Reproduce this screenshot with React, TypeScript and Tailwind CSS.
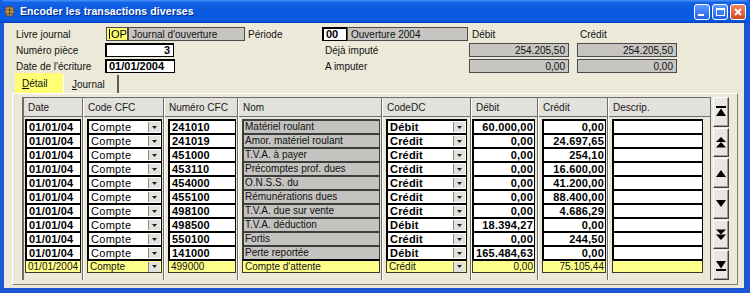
import React from "react";

type Entry = { num: string; nom: string; dc: string; debit: string; credit: string };

const ENTRIES: Entry[] = [
  { num: "241010", nom: "Matériel roulant", dc: "Débit", debit: "60.000,00", credit: "0,00" },
  { num: "241019", nom: "Amor. matériel roulant", dc: "Crédit", debit: "0,00", credit: "24.697,65" },
  { num: "451000", nom: "T.V.A. à payer", dc: "Crédit", debit: "0,00", credit: "254,10" },
  { num: "453110", nom: "Précomptes prof. dues", dc: "Crédit", debit: "0,00", credit: "16.600,00" },
  { num: "454000", nom: "O.N.S.S. du", dc: "Crédit", debit: "0,00", credit: "41.200,00" },
  { num: "455100", nom: "Rémunérations dues", dc: "Crédit", debit: "0,00", credit: "88.400,00" },
  { num: "498100", nom: "T.V.A. due sur vente", dc: "Crédit", debit: "0,00", credit: "4.686,29" },
  { num: "498500", nom: "T.V.A. déduction", dc: "Débit", debit: "18.394,27", credit: "0,00" },
  { num: "550100", nom: "Fortis", dc: "Crédit", debit: "0,00", credit: "244,50" },
  { num: "141000", nom: "Perte reportée", dc: "Débit", debit: "165.484,63", credit: "0,00" }
];

const PENDING = {
  date: "01/01/2004",
  code: "Compte",
  num: "499000",
  nom: "Compte d'attente",
  dc: "Crédit",
  debit: "0,00",
  credit: "75.105,44"
};

const cellClass = "h-[14px] flex items-center overflow-hidden whitespace-nowrap border-l-2 border-r border-t-2 border-black bg-white";
const grayCellClass = "h-[14px] flex items-center overflow-hidden whitespace-nowrap border-l-2 border-r border-t-2 border-[#3c3c3c] bg-[#C4C3C0]";
const pendingClass = "h-[14px] flex items-center overflow-hidden whitespace-nowrap border border-t-2 border-[#3a3a24] border-t-black bg-[#FFFF8C]";
const boldText = "text-[11px] font-bold leading-none tracking-[0.2px] text-black";
const plainText = "text-[10px] leading-none text-[#111]";

function ArrowDown() {
  return (
    <svg width="5" height="3" viewBox="0 0 5 3">
      <path d="M0 0h5L2.5 3z" fill="#222" />
    </svg>
  );
}

function DropButton() {
  return (
    <span className="mr-[1px] flex h-[10px] w-[12px] shrink-0 items-center justify-center border-l border-[#8a8a8a] bg-[#E4E2DD]">
      <ArrowDown />
    </span>
  );
}

function Column({
  width,
  title,
  first,
  pad,
  children
}: {
  width: string;
  title: string;
  first?: boolean;
  pad: string;
  children: React.ReactNode;
}) {
  return (
    <div className={`flex shrink-0 flex-col border-r border-[#6c6c6c] ${first ? "" : "border-l border-l-white"} ${width}`}>
      <div className="flex h-[19px] shrink-0 items-center border-b border-[#6c6c6c] bg-[#E3E1DB] pl-[4px] text-[10px] text-[#1a1a1a]">
        {title}
      </div>
      <div className={`mt-[2px] flex flex-col ${pad}`}>{children}</div>
    </div>
  );
}

function ScrollIcon({ kind }: { kind: "first" | "pgup" | "up" | "down" | "pgdn" | "last" }) {
  return (
    <svg width="10" height="11" viewBox="0 0 10 11">
      {kind === "first" && (
        <>
          <rect x="0" y="0" width="10" height="2" fill="#000" />
          <path d="M5 2.5L10 10H0z" fill="#000" />
        </>
      )}
      {kind === "pgup" && (
        <>
          <path d="M5 0L10 5H0z" fill="#000" />
          <path d="M5 5L10 10.5H0z" fill="#000" />
        </>
      )}
      {kind === "up" && <path d="M5 2L10 9H0z" fill="#000" />}
      {kind === "down" && <path d="M0 2h10L5 9z" fill="#000" />}
      {kind === "pgdn" && (
        <>
          <path d="M0 0.5h10L5 5.5z" fill="#000" />
          <path d="M0 5.5h10L5 11z" fill="#000" />
        </>
      )}
      {kind === "last" && (
        <>
          <path d="M0 1h10L5 8.5z" fill="#000" />
          <rect x="0" y="9" width="10" height="2" fill="#000" />
        </>
      )}
    </svg>
  );
}

function TitleBar() {
  return (
    <div className="flex h-[23px] shrink-0 items-center rounded-t-[5px] bg-[linear-gradient(180deg,#4B97FA_0%,#1464E8_10%,#0A58DE_45%,#0B5DE5_85%,#0744C2_100%)] pl-[4px] pr-[4px]">
      <svg width="11" height="11" viewBox="0 0 11 11" className="shrink-0">
        <path d="M1 3.5C1 1.5 3 0.5 5.5 0.5S10 1.5 10 3.5V5C10 8 8 10.5 5.5 10.5S1 8 1 5z" fill="#B8965A" stroke="#5A3C16" strokeWidth="0.8" />
        <path d="M1.2 4h8.6M5.5 0.8v9.5M2.5 7.5h6" stroke="#5A3C16" strokeWidth="0.8" />
      </svg>
      <span className="ml-[5px] text-[10.5px] font-bold tracking-[0.1px] text-white [text-shadow:1px_1px_0_#0A2A8A]">
        Encoder les transactions diverses
      </span>
      <div className="ml-auto flex gap-[2px]">
        <div className="flex h-[16px] w-[16px] items-end justify-start rounded-[3px] border border-white bg-[linear-gradient(180deg,#5C9BFF,#2462E8)] pb-[3px] pl-[3px]">
          <div className="h-[2px] w-[6px] bg-white" />
        </div>
        <div className="flex h-[16px] w-[16px] items-center justify-center rounded-[3px] border border-white bg-[linear-gradient(180deg,#5C9BFF,#2462E8)]">
          <div className="h-[8px] w-[9px] border border-t-2 border-white" />
        </div>
        <div className="flex h-[16px] w-[16px] items-center justify-center rounded-[3px] border border-white bg-[linear-gradient(180deg,#F08A62,#D2461C)]">
          <svg width="8" height="8" viewBox="0 0 8 8">
            <path d="M1 1l6 6M7 1L1 7" stroke="#fff" strokeWidth="1.8" />
          </svg>
        </div>
      </div>
    </div>
  );
}

function GrayField({ width, value, align = "right" }: { width: string; value: string; align?: "left" | "right" }) {
  return (
    <div
      className={`flex h-[14px] shrink-0 items-center border border-[#4a4a4a] bg-[#C6C5C2] px-[3px] text-[10px] text-[#111] ${width} ${
        align === "right" ? "justify-end" : "justify-start"
      }`}
    >
      {value}
    </div>
  );
}

function InputField({ width, value, align = "left" }: { width: string; value: string; align?: "left" | "right" }) {
  return (
    <div
      className={`flex h-[14px] shrink-0 items-center border border-black bg-white px-[3px] text-[11px] font-bold text-black shadow-[inset_1px_1px_0_#000] ${width} ${
        align === "right" ? "justify-end" : "justify-start"
      }`}
    >
      {value}
    </div>
  );
}

export default function App() {
  return (
    <div className="flex h-[293px] w-[750px] flex-col overflow-hidden bg-[#1E56D6] font-['Liberation_Sans',Arial,sans-serif]">
      <TitleBar />
      <div className="mb-[5px] ml-[4px] mr-[6px] flex flex-1 flex-col bg-[#ECE9D8]">
        <div className="flex flex-col gap-[2px] pl-[12px] pt-[4px] text-[10px] text-[#111]">
          <div className="flex h-[14px] items-center">
            <span className="w-[90px] shrink-0">Livre journal</span>
            <div className="flex h-[14px] w-[22px] shrink-0 items-center border border-[#4a4a4a] bg-[#FFFF6E] pl-[2px] text-[11px] text-black">
              <span className="mr-[1px] h-[10px] w-[1px] bg-black" />
              OP
            </div>
            <GrayField width="w-[117px]" value="Journal d'ouverture" align="left" />
            <span className="ml-[3px] w-[74px] shrink-0">Période</span>
            <InputField width="w-[25px]" value="00" />
            <GrayField width="w-[121px]" value="Ouverture 2004" align="left" />
            <span className="ml-[4px] w-[108px] shrink-0">Débit</span>
            <span>Crédit</span>
          </div>
          <div className="flex h-[14px] items-center">
            <span className="w-[89px] shrink-0">Numéro pièce</span>
            <InputField width="w-[69px]" value="3" align="right" />
            <span className="ml-[151px] w-[144px] shrink-0">Déjà imputé</span>
            <GrayField width="w-[100px]" value="254.205,50" />
            <div className="w-[8px] shrink-0" />
            <GrayField width="w-[100px]" value="254.205,50" />
          </div>
          <div className="flex h-[14px] items-center">
            <span className="w-[89px] shrink-0">Date de l'écriture</span>
            <InputField width="w-[70px]" value="01/01/2004" />
            <span className="ml-[150px] w-[144px] shrink-0">A imputer</span>
            <GrayField width="w-[100px]" value="0,00" />
            <div className="w-[8px] shrink-0" />
            <GrayField width="w-[100px]" value="0,00" />
          </div>
        </div>

        <div className="flex h-[20px] items-end pl-[11px] text-[10px] text-[#111]">
          <div className="flex h-[20px] w-[48px] items-center bg-[#FFFF73] pl-[7px]">
            <span>
              <span className="underline">D</span>étail
            </span>
          </div>
          <div className="flex h-[18px] w-[56px] items-center border-l border-r-2 border-l-white border-r-[#5a5a5a] pl-[8px]">
            <span>
              <span className="underline">J</span>ournal
            </span>
          </div>
        </div>

        <div className="ml-[8px] flex h-[192px] w-[726px] border border-[#808080] border-l-white border-t-white pl-[9px] pt-[3px]">
          <div className="flex h-[183px] w-[689px] shrink-0 border-l-2 border-t border-[#6c6c6c]">
            <Column width="w-[59px]" title="Date" first pad="pl-[1px] pr-[1px]">
              {ENTRIES.map((e) => (
                <div key={e.num} className={cellClass}>
                  <span className={`pl-[2px] ${boldText}`}>01/01/04</span>
                </div>
              ))}
              <div className={pendingClass}>
                <span className={`pl-[2px] ${plainText}`}>{PENDING.date}</span>
              </div>
            </Column>
            <Column width="w-[81px]" title="Code CFC" pad="pl-[3px] pr-[1px]">
              {ENTRIES.map((e) => (
                <div key={e.num} className={`${cellClass} justify-between`}>
                  <span className="pl-[2px] text-[11px] leading-none tracking-[0.3px] text-black">Compte</span>
                  <DropButton />
                </div>
              ))}
              <div className={`${pendingClass} justify-between`}>
                <span className={`pl-[2px] ${plainText}`}>{PENDING.code}</span>
                <DropButton />
              </div>
            </Column>
            <Column width="w-[74px]" title="Numéro CFC" pad="pl-[3px] pr-[1px]">
              {ENTRIES.map((e) => (
                <div key={e.num} className={cellClass}>
                  <span className={`pl-[2px] ${boldText}`}>{e.num}</span>
                </div>
              ))}
              <div className={pendingClass}>
                <span className={`pl-[2px] ${plainText}`}>{PENDING.num}</span>
              </div>
            </Column>
            <Column width="w-[144px]" title="Nom" pad="pl-[3px] pr-[1px]">
              {ENTRIES.map((e) => (
                <div key={e.num} className={grayCellClass}>
                  <span className={`pl-[1px] ${plainText} text-[#2a2a2a]`}>{e.nom}</span>
                </div>
              ))}
              <div className={pendingClass}>
                <span className={`pl-[2px] ${plainText}`}>{PENDING.nom}</span>
              </div>
            </Column>
            <Column width="w-[89px]" title="CodeDC" pad="pl-[3px] pr-[3px]">
              {ENTRIES.map((e) => (
                <div key={e.num} className={`${cellClass} justify-between`}>
                  <span className={`pl-[2px] ${boldText}`}>{e.dc}</span>
                  <DropButton />
                </div>
              ))}
              <div className={`${pendingClass} justify-between`}>
                <span className={`pl-[2px] ${plainText}`}>{PENDING.dc}</span>
                <DropButton />
              </div>
            </Column>
            <Column width="w-[67px]" title="Débit" pad="pl-[0px] pr-[2px]">
              {ENTRIES.map((e) => (
                <div key={e.num} className={`${cellClass} justify-end`}>
                  <span className={`pr-[1px] ${boldText}`}>{e.debit}</span>
                </div>
              ))}
              <div className={`${pendingClass} justify-end`}>
                <span className={`pr-[1px] ${plainText}`}>{PENDING.debit}</span>
              </div>
            </Column>
            <Column width="w-[70px]" title="Crédit" pad="pl-[3px] pr-[1px]">
              {ENTRIES.map((e) => (
                <div key={e.num} className={`${cellClass} justify-end`}>
                  <span className={`pr-[1px] ${boldText}`}>{e.credit}</span>
                </div>
              ))}
              <div className={`${pendingClass} justify-end`}>
                <span className={`pr-[1px] ${plainText}`}>{PENDING.credit}</span>
              </div>
            </Column>
            <Column width="w-[103px]" title="Descrip." pad="pl-[3px] pr-[7px]">
              {ENTRIES.map((e) => (
                <div key={e.num} className={cellClass} />
              ))}
              <div className={pendingClass} />
            </Column>
          </div>

          <div className="ml-[2px] flex h-[183px] w-[16px] shrink-0 flex-col gap-[1px]">
            {(["first", "pgup", "up", "down", "pgdn", "last"] as const).map((kind) => (
              <button
                key={kind}
                type="button"
                className="flex flex-1 items-center justify-center border border-b-[#404040] border-l-white border-r-[#404040] border-t-white bg-[#E9E7E1] shadow-[inset_-1px_-1px_0_#9a9a9a]"
              >
                <ScrollIcon kind={kind} />
              </button>
            ))}
          </div>
        </div>
      </div>
    </div>
  );
}
